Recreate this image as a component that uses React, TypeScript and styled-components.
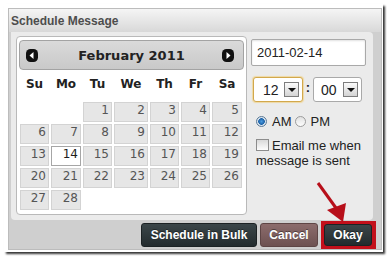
import React from "react";
import styled, { createGlobalStyle } from "styled-components";

const GlobalStyle = createGlobalStyle`
  html, body {
    margin: 0;
    padding: 0;
    background: #fff;
  }
  body {
    font-family: "Liberation Sans", Arial, sans-serif;
  }
  * {
    box-sizing: border-box;
  }
`;

const Page = styled.div`
  position: relative;
  width: 387px;
  height: 263px;
  padding: 4px 0 0 4px;
`;

const Frame = styled.div`
  width: 379px;
  padding: 4px 1px 2px 4px;
  background: #fff;
  box-shadow: 2px 2px 2px rgba(0, 0, 0, 0.8);
`;

const Dialog = styled.div`
  width: 374px;
  height: 242px;
  border: 1px solid #bcbcbc;
  background: #cfcfcf;
  display: flex;
  flex-direction: column;
`;

const TitleBar = styled.div`
  height: 23px;
  padding-left: 2px;
  display: flex;
  align-items: center;
  background: linear-gradient(#f5f5f5, #d8d8d8);
  font: bold 12px "Liberation Sans", Arial, sans-serif;
  color: #4d4d4d;
`;

const Body = styled.div`
  height: 188px;
  margin: 0 8px 0 2px;
  padding: 4px 0 5px 5px;
  display: flex;
  gap: 4px;
  background: #ebebeb;
  border-radius: 0 4px 4px 4px;
`;

const Panel = styled.div`
  width: 231px;
  height: 179px;
  padding: 3px 2px;
  background: #fff;
  border: 1px solid #b9b9b9;
  border-radius: 4px;
`;

const CalHeader = styled.div`
  height: 30px;
  padding: 0 9px 0 6px;
  display: flex;
  align-items: center;
  background: linear-gradient(#dadada, #c9c9c9);
  border: 1px solid #a3a3a3;
  border-radius: 4px;
`;

const MonthTitle = styled.div`
  flex: 1;
  text-align: center;
  padding-left: 3px;
  font: bold 13px "DejaVu Sans", Verdana, sans-serif;
  color: #222;
`;

const NavIcon = styled.svg`
  display: block;
  width: 12px;
  height: 13px;
`;

const Days = styled.div<{ $head?: boolean }>`
  display: grid;
  grid-template-columns: 29px 30px 29px 34px 29px 29px 30px;
  column-gap: 2px;
  row-gap: 2px;
  margin: ${(p) => (p.$head ? "7px 0 6px 1px" : "0 0 0 1px")};
`;

const DayName = styled.div`
  height: 19px;
  line-height: 19px;
  text-align: center;
  font: bold 12px "DejaVu Sans", Verdana, sans-serif;
  color: #222;
`;

const Cell = styled.div<{ $today?: boolean; $blank?: boolean }>`
  height: 20px;
  line-height: 18px;
  padding-right: 2px;
  text-align: right;
  font: 12px "DejaVu Sans", Verdana, sans-serif;
  color: ${(p) => (p.$today ? "#1e1e1e" : "#555")};
  background: ${(p) => (p.$blank ? "transparent" : p.$today ? "#fff" : "#e6e6e6")};
  border: 1px solid
    ${(p) => (p.$blank ? "transparent" : p.$today ? "#a6a6a6" : "#d3d3d3")};
`;

const Side = styled.div`
  width: 122px;
  display: flex;
  flex-direction: column;
  font-size: 13px;
  color: #222;
`;

const DateInput = styled.div`
  width: 115px;
  height: 27px;
  margin-top: 3px;
  padding-left: 5px;
  display: flex;
  align-items: center;
  background: #fff;
  border: 1px solid #a9a9a9;
  border-radius: 2px;
  box-shadow: inset 0 1px 2px rgba(0, 0, 0, 0.12);
  font-size: 13px;
`;

const TimeRow = styled.div`
  margin: 11px 0 0 2px;
  display: flex;
  align-items: center;
`;

const Select = styled.div<{ $focus?: boolean; $w: number; $pl: number }>`
  width: ${(p) => p.$w}px;
  height: 25px;
  padding: 0 3px 0 ${(p) => p.$pl}px;
  display: flex;
  align-items: center;
  justify-content: space-between;
  background: #fff;
  border: 1px solid ${(p) => (p.$focus ? "#d2a84c" : "#a9a9a9")};
  border-radius: 3px;
  box-shadow: ${(p) => (p.$focus ? "0 0 1px 1px #efd9a4" : "none")};
  font-size: 14px;
  color: #222;
`;

const DropButton = styled.div`
  width: 15px;
  height: 15px;
  display: flex;
  align-items: center;
  justify-content: center;
  background: linear-gradient(#fbfbfb, #d4d4d4);
  border: 1px solid #7d7d7d;

  &::after {
    content: "";
    border-left: 4px solid transparent;
    border-right: 4px solid transparent;
    border-top: 4px solid #111;
  }
`;

const Colon = styled.div`
  width: 10px;
  text-align: center;
  margin-top: -4px;
  font: bold 13px "Liberation Sans", Arial, sans-serif;
  color: #222;
`;

const RadioRow = styled.div`
  margin: 11px 0 0 5px;
  height: 16px;
  display: flex;
  align-items: center;
`;

const Radio = styled.span<{ $checked?: boolean }>`
  width: 11px;
  height: 11px;
  border-radius: 50%;
  margin-right: 5px;
  border: 1px solid ${(p) => (p.$checked ? "#5d7a96" : "#9c9c9c")};
  background: ${(p) =>
    p.$checked
      ? "radial-gradient(circle, #4a9be0 0, #1d62a8 3px, #d9e4ee 3.6px)"
      : "linear-gradient(#e1e1e1, #fdfdfd)"};
`;

const RadioLabel = styled.span`
  margin-right: 3px;
`;

const EmailText = styled.div`
  margin: 9px 0 0 5px;
  line-height: 15px;
`;

const CheckBox = styled.span`
  display: inline-block;
  width: 13px;
  height: 12px;
  margin-right: 3px;
  vertical-align: -1px;
  border: 1px solid #8c8c8c;
  background: linear-gradient(#d9d9d9, #fdfdfd);
`;

const Footer = styled.div`
  flex: 1;
  padding-right: 5px;
  display: flex;
  align-items: center;
  justify-content: flex-end;
  gap: 3px;
`;

const Button = styled.div<{ $variant?: "dark" | "muted"; $w: number; $h?: number }>`
  width: ${(p) => p.$w}px;
  height: ${(p) => p.$h ?? 24}px;
  display: flex;
  align-items: center;
  justify-content: center;
  border-radius: 3px;
  font: bold 12px "Liberation Sans", Arial, sans-serif;
  color: #fff;
  text-shadow: 0 -1px 0 rgba(0, 0, 0, 0.4);
  background: ${(p) =>
    p.$variant === "muted"
      ? "linear-gradient(#8c6c6c, #6d5151)"
      : "linear-gradient(#3b4649, #232b2e)"};
  border: 1px solid ${(p) => (p.$variant === "muted" ? "#5e4545" : "#1c2224")};
`;

const Highlight = styled.div`
  padding-right: 1px;
  border: 3px solid #c3101b;
  background: #c3101b;
`;

const Annotation = styled.svg`
  position: absolute;
  left: 0;
  top: 0;
  pointer-events: none;
`;

function NavArrow({ dir }: { dir: "prev" | "next" }) {
  return (
    <NavIcon viewBox="0 0 12 13">
      <rect x="0" y="0" width="12" height="13" rx="4.5" fill="#111" />
      {dir === "prev" ? (
        <polygon points="3.5,6.5 7.5,3 7.5,10" fill="#fff" />
      ) : (
        <polygon points="8.5,6.5 4.5,3 4.5,10" fill="#fff" />
      )}
    </NavIcon>
  );
}

const dayNames = ["Su", "Mo", "Tu", "We", "Th", "Fr", "Sa"];
const days: (number | null)[] = [null, null];
for (let d = 1; d <= 28; d++) days.push(d);

export default function App() {
  return (
    <Page>
      <GlobalStyle />
      <Frame>
        <Dialog>
          <TitleBar>Schedule Message</TitleBar>
          <Body>
            <Panel>
              <CalHeader>
                <NavArrow dir="prev" />
                <MonthTitle>February 2011</MonthTitle>
                <NavArrow dir="next" />
              </CalHeader>
              <Days $head>
                {dayNames.map((n) => (
                  <DayName key={n}>{n}</DayName>
                ))}
              </Days>
              <Days>
                {days.map((d, i) =>
                  d === null ? (
                    <Cell key={"b" + i} $blank />
                  ) : (
                    <Cell key={d} $today={d === 14}>
                      {d}
                    </Cell>
                  )
                )}
              </Days>
            </Panel>
            <Side>
              <DateInput>2011-02-14</DateInput>
              <TimeRow>
                <Select $focus $w={50} $pl={9}>
                  12
                  <DropButton />
                </Select>
                <Colon>:</Colon>
                <Select $w={49} $pl={7}>
                  00
                  <DropButton />
                </Select>
              </TimeRow>
              <RadioRow>
                <Radio $checked />
                <RadioLabel>AM</RadioLabel>
                <Radio />
                <RadioLabel>PM</RadioLabel>
              </RadioRow>
              <EmailText>
                <CheckBox />
                Email me when message is sent
              </EmailText>
            </Side>
          </Body>
          <Footer>
            <Button $w={116}>Schedule in Bulk</Button>
            <Button $variant="muted" $w={58}>
              Cancel
            </Button>
            <Highlight>
              <Button $w={48} $h={22}>
                Okay
              </Button>
            </Highlight>
          </Footer>
        </Dialog>
      </Frame>
      <Annotation width="387" height="263" viewBox="0 0 387 263">
        <line x1="318" y1="183" x2="336" y2="208" stroke="#b70f1a" strokeWidth="3" />
        <polygon points="327,210 346,203 343,222" fill="#b70f1a" />
      </Annotation>
    </Page>
  );
}
